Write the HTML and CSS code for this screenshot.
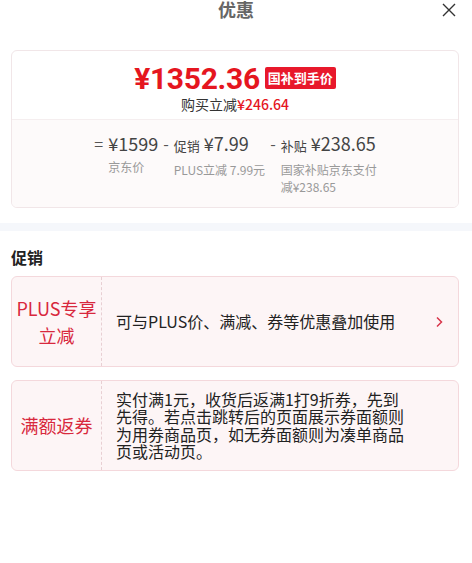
FILE: index.html
```html
<html>
    <head>
        <meta charset="utf-8">
        <link rel="stylesheet" href="styles.css">
    </head>
    <body>
        <!-- header: title + close -->
        <div class="header">
            <span></span>
            <div class="title">优惠</div>
            <span class="close">
                <svg width="14" height="14" viewBox="0 0 14 14">
                    <path d="M1 1 L13 13 M13 1 L1 13" stroke="#333" stroke-width="1.4" fill="none"/>
                </svg>
            </span>
        </div>

        <div class="price_card">
            <div class="price_top">
                <div class="price_line">
                    <span class="final_price">¥1352.36</span>
                    <span class="price_tag">国补到手价</span>
                </div>
                <div class="saved">购买立减<span class="saved_value">¥246.64</span></div>
            </div>
            <div class="price_detail">
                <div class="part">
                    <span class="sign">=</span>
                    <div class="part_body">
                        <div class="amount">¥1599</div>
                        <div class="part_label">京东价</div>
                    </div>
                </div>
                <div class="part">
                    <span class="sign">-</span>
                    <div class="part_body">
                        <div class="amount"><span class="kind">促销</span> ¥7.99</div>
                        <div class="part_label">PLUS立减 7.99元</div>
                    </div>
                </div>
                <div class="part">
                    <span class="sign">-</span>
                    <div class="part_body narrow">
                        <div class="amount"><span class="kind">补贴</span> ¥238.65</div>
                        <div class="part_label">国家补贴京东支付减¥238.65</div>
                    </div>
                </div>
            </div>
        </div>

        <div class="band"></div>

        <div class="section_title">促销</div>

        <div class="promo">
            <div class="promo_kind">PLUS专享<br>立减</div>
            <div class="promo_text">可与PLUS价、满减、券等优惠叠加使用</div>
            <span class="promo_arrow">
                <svg width="8" height="12" viewBox="0 0 8 12">
                    <path d="M2 1.5 L6.5 6 L2 10.5" stroke="#d8354a" stroke-width="1.5" fill="none"/>
                </svg>
            </span>
        </div>
        <div class="promo">
            <div class="promo_kind">满额返券</div>
            <div class="promo_text">实付满1元，收货后返满1打9折券，先到先得。若点击跳转后的页面展示券面额则为用券商品页，如无券面额则为凑单商品页或活动页。</div>
        </div>
    </body>
</html>
```

FILE: styles.css
```css
body {
    margin: 0;
    background: #fff;
    font-family: "Noto Sans CJK SC", "Noto Sans", sans-serif;
    color: #333;
}
.header {
    display: grid;
    grid-template-columns: 1fr auto 1fr;
    height: 50px;
}
.title {
    font-size: 18px;
    line-height: 18px;
    font-weight: bold;
    color: #666;
}
.close {
    justify-self: end;
    margin: 3px 16px 0 0;
}
.price_card {
    margin: 0 13px 0 11px;
    border: 1px solid #f1e6e8;
    border-radius: 6px;
    overflow: hidden;
}
.price_top {
    padding: 11px 0 5px;
    text-align: center;
}
.price_line {
    display: flex;
    justify-content: center;
    align-items: center;
    height: 32px;
}
.final_price {
    font-family: Roboto, "Noto Sans", sans-serif;
    font-size: 30px;
    font-weight: bold;
    color: #e5161f;
    letter-spacing: -0.3px;
}
.price_tag {
    margin-left: 5px;
    background: #e8182b;
    color: #fff;
    font-size: 13px;
    font-weight: bold;
    line-height: 22px;
    padding: 0 3px;
    border-radius: 2px;
}
.saved {
    font-size: 14px;
    line-height: 20px;
    color: #333;
}
.saved_value {
    color: #e5161f;
    font-weight: 500;
}
.price_detail {
    display: flex;
    justify-content: center;
    gap: 5px;
    padding: 11px 0 12px 3px;
    background: #fdfafa;
    border-top: 1px solid #f5eeef;
}
.part {
    display: flex;
    align-items: flex-start;
}
.sign {
    font-size: 16px;
    line-height: 24px;
    color: #555;
    margin-right: 5px;
}
.part_body.narrow {
    max-width: 98px;
}
.amount {
    font-size: 18px;
    line-height: 24px;
    color: #444;
    white-space: nowrap;
}
.kind {
    font-size: 13px;
}
.part_label {
    margin-top: 3px;
    font-size: 12px;
    line-height: 17px;
    color: #999;
}
.band {
    height: 8px;
    margin-top: 15px;
    background: #f5f7fb;
}
.section_title {
    padding: 16px 11px 9px;
    font-size: 16px;
    line-height: 20px;
    font-weight: bold;
    color: #222;
}
.promo {
    display: flex;
    align-items: center;
    box-sizing: border-box;
    min-height: 91px;
    margin: 0 13px 13px 11px;
    background: #fdf5f6;
    border: 1px solid #f4d8dc;
    border-radius: 6px;
}
.promo_kind {
    align-self: stretch;
    display: flex;
    align-items: center;
    justify-content: center;
    width: 89px;
    flex-shrink: 0;
    border-right: 1px dashed #e8cfd3;
    text-align: center;
    font-size: 18px;
    line-height: 27px;
    color: #d8283d;
}
.promo_text {
    flex: 1;
    padding: 9px 50px 9px 14px;
    font-size: 16px;
    line-height: 17.5px;
    color: #222;
}
.promo_arrow {
    margin-right: 15px;
    margin-left: -30px;
}
```
